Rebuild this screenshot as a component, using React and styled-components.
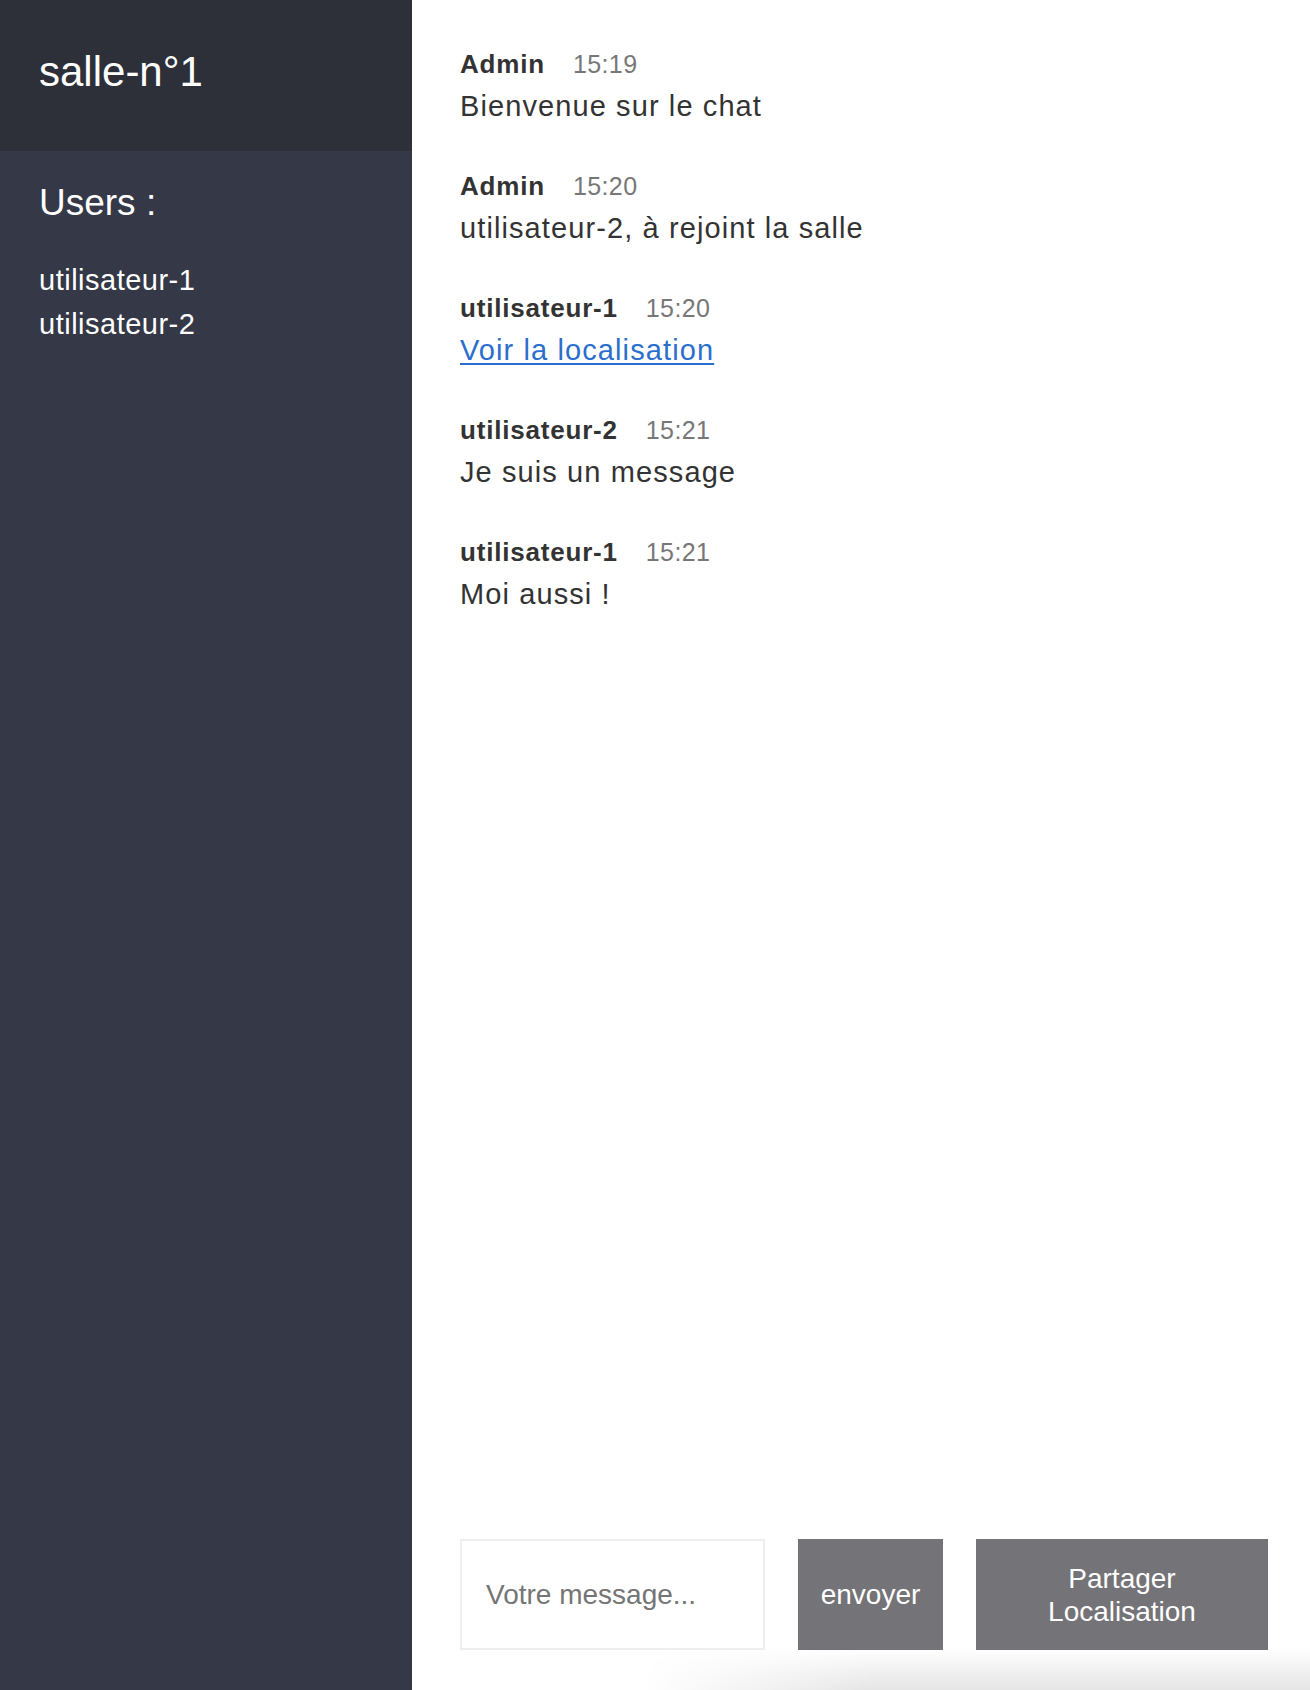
import React from 'react'
import styled, { createGlobalStyle } from 'styled-components';

const GlobalStyle = createGlobalStyle`
    html, body {
        margin: 0;
        padding: 0;
        height: 100%;
    }

    body {
        font-family: "Liberation Sans", Arial, sans-serif;
        color: #333333;
        background: #ffffff;
    }

    #root {
        height: 100%;
    }
`;

const Layout = styled.div`
    width: 100%;
    height: 100vh;

    display: flex;
    flex-direction: row;
`;

const SideBar = styled.aside`
    width: 412px;
    flex-shrink: 0;

    display: flex;
    flex-direction: column;

    background-color: #353846;
    color: #ffffff;
`;

const RoomHeader = styled.div`
    height: 151px;
    box-sizing: border-box;

    padding: 48px 39px 0;

    background-color: #2e3039;
`;

const RoomTitle = styled.h1`
    margin: 0;

    font-size: 42px;
    font-weight: 400;
    line-height: 48px;
`;

const UsersArea = styled.div`
    padding: 31px 39px 0;
`;

const UsersTitle = styled.h2`
    margin: 0;

    font-size: 37px;
    font-weight: 400;
    line-height: 42px;
`;

const UsersList = styled.ul`
    margin: 34px 0 0;
    padding: 0;

    list-style: none;
`;

const UserItem = styled.li`
    font-size: 29px;
    line-height: 44px;
    letter-spacing: 0.5px;
`;

const ChatMain = styled.main`
    flex: 1;
    position: relative;

    display: flex;
    flex-direction: column;

    padding: 49px 42px 40px 48px;
    box-sizing: border-box;
    overflow: hidden;

    &::after {
        content: '';
        position: absolute;
        left: 230px;
        right: 0;
        bottom: 0;
        height: 42px;

        background: linear-gradient(to bottom, rgba(0, 0, 0, 0), rgba(0, 0, 0, 0.1));
        -webkit-mask-image: linear-gradient(to right, transparent, #000 35%);
        mask-image: linear-gradient(to right, transparent, #000 35%);
        pointer-events: none;
    }
`;

const MessageList = styled.div`
    flex: 1;
`;

const Message = styled.div`
    margin-bottom: 47px;
`;

const MessageMeta = styled.div`
    display: flex;
    flex-direction: row;
    align-items: baseline;

    line-height: 30px;
`;

const Author = styled.span`
    font-size: 26px;
    font-weight: 700;
    letter-spacing: 0.8px;
    color: #333333;
`;

const Time = styled.span`
    margin-left: 28px;

    font-size: 25px;
    letter-spacing: 0.4px;
    color: #777777;
`;

const MessageText = styled.p`
    margin: 9px 0 0;

    font-size: 29px;
    line-height: 36px;
    letter-spacing: 1.1px;
    color: #333333;
`;

const LocationLink = styled.a`
    color: #2b6fce;
    text-decoration: underline;
    text-underline-offset: 3px;
    text-decoration-thickness: 2px;
`;

const ComposeBar = styled.form`
    display: flex;
    flex-direction: row;
    align-items: stretch;
    gap: 33px;

    height: 111px;
`;

const MessageInput = styled.input`
    width: 305px;
    box-sizing: border-box;

    padding: 0 24px;

    border: 2px solid #eeeeee;
    outline: none;

    font-family: "Liberation Sans", Arial, sans-serif;
    font-size: 28px;
    color: #333333;

    &::placeholder {
        color: #757575;
    }
`;

const ActionButton = styled.button`
    width: ${props => props.$width}px;

    padding: 0 22px;

    border: none;
    background-color: #747378;

    font-family: "Liberation Sans", Arial, sans-serif;
    font-size: 28px;
    line-height: 33px;
    color: #ffffff;
    cursor: pointer;
`;

const messages = [
    { author: 'Admin', time: '15:19', text: 'Bienvenue sur le chat' },
    { author: 'Admin', time: '15:20', text: 'utilisateur-2, à rejoint la salle' },
    { author: 'utilisateur-1', time: '15:20', link: 'Voir la localisation' },
    { author: 'utilisateur-2', time: '15:21', text: 'Je suis un message' },
    { author: 'utilisateur-1', time: '15:21', text: 'Moi aussi !' },
];

const users = ['utilisateur-1', 'utilisateur-2'];

export default function App() {
    return (
        <>
            <GlobalStyle />
            <Layout>
                <SideBar>
                    <RoomHeader>
                        <RoomTitle>salle-n°1</RoomTitle>
                    </RoomHeader>
                    <UsersArea>
                        <UsersTitle>Users :</UsersTitle>
                        <UsersList>
                            {users.map(user => (
                                <UserItem key={user}>{user}</UserItem>
                            ))}
                        </UsersList>
                    </UsersArea>
                </SideBar>

                <ChatMain>
                    <MessageList>
                        {messages.map((message, index) => (
                            <Message key={index}>
                                <MessageMeta>
                                    <Author>{message.author}</Author>
                                    <Time>{message.time}</Time>
                                </MessageMeta>
                                <MessageText>
                                    {message.link
                                        ? <LocationLink href="#">{message.link}</LocationLink>
                                        : message.text}
                                </MessageText>
                            </Message>
                        ))}
                    </MessageList>

                    <ComposeBar onSubmit={e => e.preventDefault()}>
                        <MessageInput placeholder="Votre message..." />
                        <ActionButton $width={145}>envoyer</ActionButton>
                        <ActionButton $width={292}>Partager Localisation</ActionButton>
                    </ComposeBar>
                </ChatMain>
            </Layout>
        </>
    );
}
